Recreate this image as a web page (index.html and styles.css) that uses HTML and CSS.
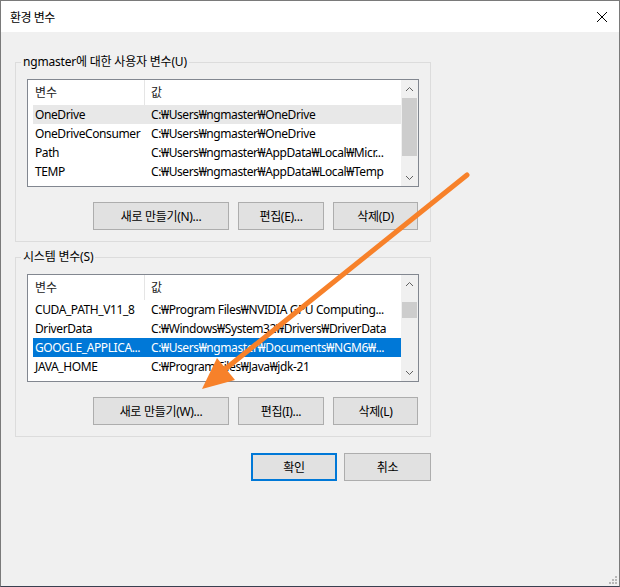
FILE: index.html
```html
<!DOCTYPE html>
<html lang="ko">
<head>
  <meta charset="UTF-8" />
  <title>환경 변수</title>
  <link rel="stylesheet" href="styles.css">
</head>
<body>

<div class="window">
  <div class="titlebar">
    <span class="title">환경 변수</span>
    <svg class="close" width="12" height="12" viewBox="0 0 12 12">
      <path d="M1 1 L11 11 M11 1 L1 11" stroke="#000" stroke-width="1" fill="none" />
    </svg>
  </div>

  <div class="content">
    <fieldset class="group">
      <legend>ngmaster에 대한 사용자 변수(U)</legend>
      <div class="list">
        <div class="list-body">
          <div class="list-head"><span>변수</span><span>값</span></div>
          <div class="row hover"><span>OneDrive</span><span>C:₩Users₩ngmaster₩OneDrive</span></div>
          <div class="row"><span>OneDriveConsumer</span><span>C:₩Users₩ngmaster₩OneDrive</span></div>
          <div class="row"><span>Path</span><span>C:₩Users₩ngmaster₩AppData₩Local₩Micr...</span></div>
          <div class="row"><span>TEMP</span><span>C:₩Users₩ngmaster₩AppData₩Local₩Temp</span></div>
        </div>
        <div class="scrollbar">
          <div class="arrow"><svg width="9" height="6" viewBox="0 0 9 6"><path d="M1 5 L4.5 1.5 L8 5" stroke="#606060" fill="none" /></svg></div>
          <div class="track"><div class="thumb thumb-user"></div></div>
          <div class="arrow"><svg width="9" height="6" viewBox="0 0 9 6"><path d="M1 1 L4.5 4.5 L8 1" stroke="#606060" fill="none" /></svg></div>
        </div>
      </div>
      <div class="buttons">
        <button class="btn btn-new">새로 만들기(N)...</button>
        <button class="btn btn-edit">편집(E)...</button>
        <button class="btn btn-del">삭제(D)</button>
      </div>
    </fieldset>

    <fieldset class="group group-system">
      <legend>시스템 변수(S)</legend>
      <div class="list">
        <div class="list-body">
          <div class="list-head"><span>변수</span><span>값</span></div>
          <div class="row"><span>CUDA_PATH_V11_8</span><span>C:₩Program Files₩NVIDIA GPU Computing...</span></div>
          <div class="row"><span>DriverData</span><span>C:₩Windows₩System32₩Drivers₩DriverData</span></div>
          <div class="row selected"><span>GOOGLE_APPLICA...</span><span>C:₩Users₩ngmaster₩Documents₩NGM6₩...</span></div>
          <div class="row"><span>JAVA_HOME</span><span>C:₩Program Files₩Java₩jdk-21</span></div>
        </div>
        <div class="scrollbar">
          <div class="arrow"><svg width="9" height="6" viewBox="0 0 9 6"><path d="M1 5 L4.5 1.5 L8 5" stroke="#606060" fill="none" /></svg></div>
          <div class="track"><div class="thumb thumb-system"></div></div>
          <div class="arrow"><svg width="9" height="6" viewBox="0 0 9 6"><path d="M1 1 L4.5 4.5 L8 1" stroke="#606060" fill="none" /></svg></div>
        </div>
      </div>
      <div class="buttons">
        <button class="btn btn-new">새로 만들기(W)...</button>
        <button class="btn btn-edit">편집(I)...</button>
        <button class="btn btn-del">삭제(L)</button>
      </div>
    </fieldset>

    <div class="dialog-buttons">
      <button class="btn btn-ok">확인</button>
      <button class="btn btn-cancel">취소</button>
    </div>
  </div>

  <!-- 주석 화살표 -->
  <svg class="annotation" width="620" height="587" viewBox="0 0 620 587">
    <line x1="467" y1="175" x2="224" y2="370" stroke="#f7812a" stroke-width="5" stroke-linecap="round" />
    <polygon points="202,389 217,358 235,380" fill="#f7812a" />
  </svg>

  <svg class="grip" width="10" height="10" viewBox="0 0 10 10">
    <rect x="7" y="1" width="2" height="2" fill="#b8b8b8" />
    <rect x="4" y="4" width="2" height="2" fill="#b8b8b8" />
    <rect x="7" y="4" width="2" height="2" fill="#b8b8b8" />
    <rect x="1" y="7" width="2" height="2" fill="#b8b8b8" />
    <rect x="4" y="7" width="2" height="2" fill="#b8b8b8" />
    <rect x="7" y="7" width="2" height="2" fill="#b8b8b8" />
  </svg>
</div>

</body>
</html>
```

FILE: styles.css
```css
body { margin: 0; background: #fff; }
.window {
  position: relative;
  width: 620px;
  height: 587px;
  box-sizing: border-box;
  border: 1px solid #7a7a7a;
  border-bottom-color: #3a4050;
  background: #f0f0f0;
  font-family: "Noto Sans", "Noto Sans CJK KR", sans-serif;
  font-size: 12px;
  color: #000;
  overflow: hidden;
}
.titlebar {
  height: 31px;
  background: #fff;
  display: flex;
  align-items: center;
  justify-content: space-between;
  padding: 0 11px 0 9px;
}
.title { font-size: 12px; letter-spacing: -0.5px; }
.close { display: block; }

.content { padding: 22px 0 0 14px; }

.group {
  width: 416px;
  box-sizing: border-box;
  margin: 0;
  padding: 9px 11px 11px 11px;
  border: 1px solid #dcdcdc;
}
.group legend {
  padding: 0 2px;
  margin-left: -6px;
  line-height: 16px;
  color: #000;
  letter-spacing: -0.2px;
}
.group-system { margin-top: 7px; }

.list {
  display: flex;
  height: 108px;
  box-sizing: border-box;
  border: 1px solid #828790;
  background: #fff;
}
.list-body { flex: 1; overflow: hidden; }
.list-head {
  display: grid;
  grid-template-columns: 112px 1fr;
  height: 25px;
  line-height: 25px;
  margin-left: 5px;
  color: #222;
}
.list-head span:first-child { padding-left: 2px; border-right: 1px solid #e5e5e5; }
.list-head span:last-child { padding-left: 6px; }
.row {
  display: grid;
  grid-template-columns: 111px 1fr;
  height: 19px;
  line-height: 19px;
  margin-left: 5px;
  letter-spacing: -0.4px;
}
.row span { white-space: nowrap; overflow: hidden; }
.row span:first-child { padding-left: 2px; }
.row span:last-child { padding-left: 7px; }
.row.hover { background: #e8e8e8; }
.row.selected { background: #0078d7; color: #fff; }

.scrollbar {
  width: 17px;
  display: flex;
  flex-direction: column;
  background: #f0f0f0;
}
.arrow {
  height: 17px;
  display: flex;
  align-items: center;
  justify-content: center;
}
.track { flex: 1; }
.thumb { margin: 1px 1px 0 1px; background: #cdcdcd; }
.thumb-user { height: 58px; }
.thumb-system { margin-top: 10px; height: 16px; }

.buttons {
  display: flex;
  justify-content: flex-end;
  gap: 9px;
  margin-top: 15px;
  padding-right: 1px;
}
.btn {
  height: 28px;
  box-sizing: border-box;
  background: #e1e1e1;
  border: 1px solid #adadad;
  font-family: "Noto Sans", "Noto Sans CJK KR", sans-serif;
  font-size: 12px;
  color: #000;
  padding: 0;
  letter-spacing: -0.3px;
}
.btn-new { width: 136px; }
.btn-edit { width: 86px; }
.btn-del { width: 85px; }

.dialog-buttons {
  width: 416px;
  display: flex;
  justify-content: flex-end;
  gap: 7px;
  margin-top: 16px;
}
.btn-ok { width: 86px; border: 2px solid #0078d7; }
.btn-cancel { width: 87px; }

.annotation {
  position: absolute;
  top: -1px;
  left: -1px;
  pointer-events: none;
}
.grip {
  position: absolute;
  right: 1px;
  bottom: 1px;
}
```
